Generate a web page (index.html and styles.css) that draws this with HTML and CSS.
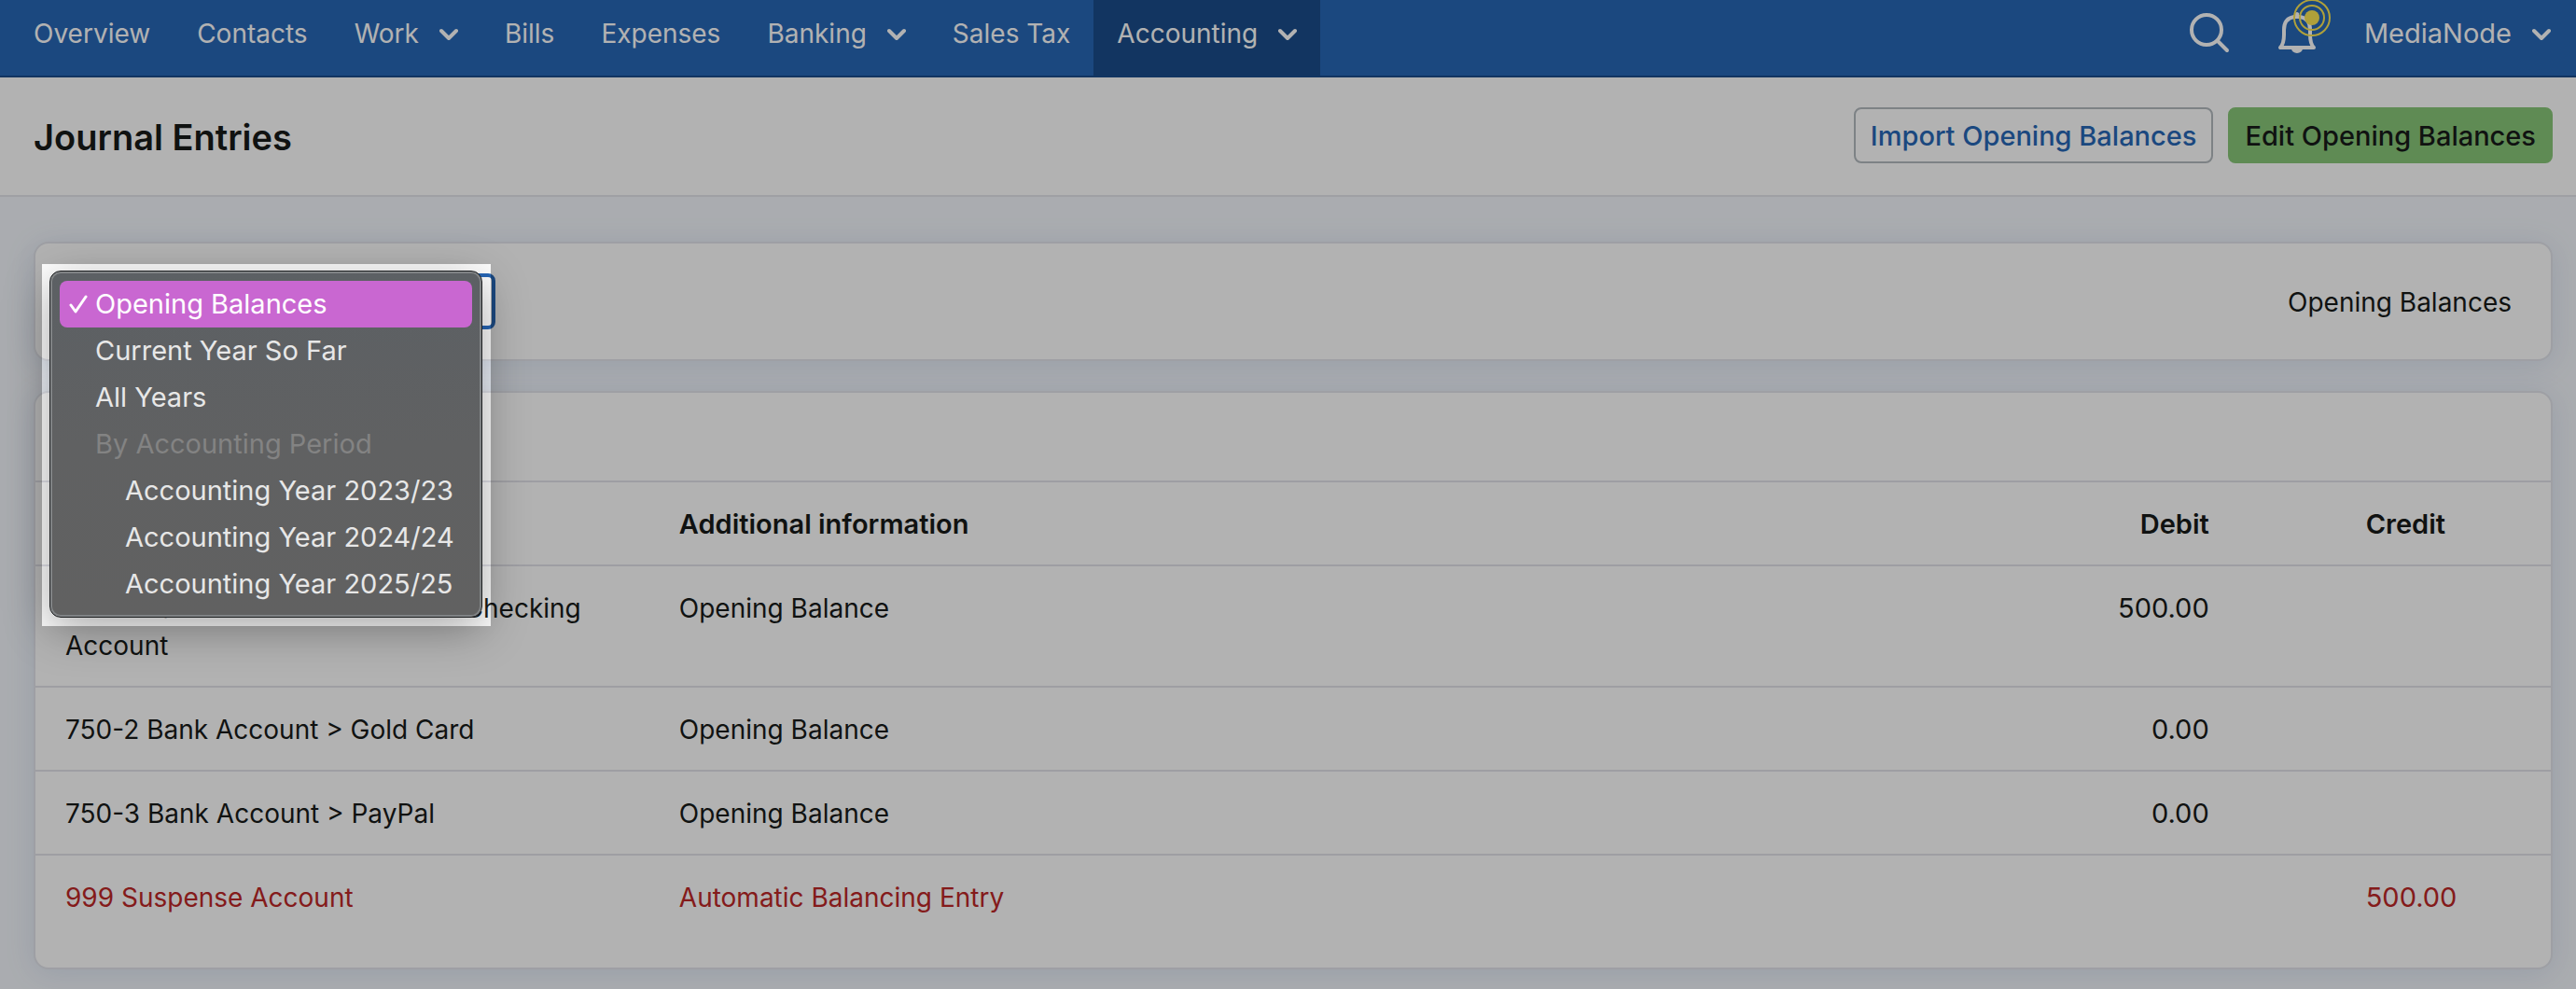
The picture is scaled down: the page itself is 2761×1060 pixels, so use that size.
FILE: index.html
```html
<!DOCTYPE html>
<html lang="en">
<head>
<meta charset="utf-8">
<title>Journal Entries</title>
<link rel="stylesheet" href="styles.css">
</head>
<body>
<header class="nav">
  <nav class="nav-links" aria-label="Main">
    <a class="nav-item" href="#">Overview</a>
    <a class="nav-item" href="#">Contacts</a>
    <a class="nav-item" href="#">Work<svg class="chevron" viewBox="0 0 20 14" aria-hidden="true"><path d="M2 3l8 8 8-8"/></svg></a>
    <a class="nav-item" href="#">Bills</a>
    <a class="nav-item" href="#">Expenses</a>
    <a class="nav-item" href="#">Banking<svg class="chevron" viewBox="0 0 20 14" aria-hidden="true"><path d="M2 3l8 8 8-8"/></svg></a>
    <a class="nav-item" href="#">Sales Tax</a>
    <a class="nav-item active" href="#" aria-current="page">Accounting<svg class="chevron" viewBox="0 0 20 14" aria-hidden="true"><path d="M2 3l8 8 8-8"/></svg></a>
  </nav>
  <div class="nav-tools">
    <button class="icon-button" type="button" aria-label="Search">
      <svg class="icon" viewBox="0 0 44 44" aria-hidden="true"><circle cx="19" cy="19" r="16"/><path d="M31 31l10 10"/></svg>
    </button>
    <button class="icon-button bell" type="button" aria-label="Notifications">
      <svg class="icon" viewBox="0 0 44 44" aria-hidden="true"><path d="M4 38h36c-3-3-4-8-4-14v-5c0-8-4-13-11-14h-6C12 6 8 11 8 19v5c0 6-1 11-4 14z"/><path class="solid" d="M20 1a3 3 0 0 1 4 0v4h-4zM16 39h12a6 5 0 0 1-12 0z"/></svg>
      <svg class="beacon" viewBox="0 0 40 40" aria-hidden="true"><circle cx="20" cy="20" r="19"/><circle cx="20" cy="20" r="13"/><circle class="dot" cx="20" cy="20" r="8"/></svg>
    </button>
    <a class="account" href="#">MediaNode<svg class="chevron" viewBox="0 0 20 14" aria-hidden="true"><path d="M2 3l8 8 8-8"/></svg></a>
  </div>
</header>

<div class="page-head">
  <h1 class="title">Journal Entries</h1>
  <div class="actions">
    <button class="button outline" type="button">Import Opening Balances</button>
    <button class="button primary" type="button">Edit Opening Balances</button>
  </div>
</div>

<main class="content">
  <section class="card filter">
    <div class="period">
      <select class="period-select" aria-label="Period">
        <option></option>
      </select>
      <div class="spotlight"></div>
      <ul class="menu" role="listbox" aria-label="Period options">
        <li class="option selected" role="option" aria-selected="true"><svg class="check" viewBox="0 0 20 22" aria-hidden="true"><path d="M2 12l5 7L18 3"/></svg>Opening Balances</li>
        <li class="option" role="option">Current Year So Far</li>
        <li class="option" role="option">All Years</li>
        <li class="option group" role="presentation">By Accounting Period</li>
        <li class="option nested" role="option">Accounting Year 2023/23</li>
        <li class="option nested" role="option">Accounting Year 2024/24</li>
        <li class="option nested" role="option">Accounting Year 2025/25</li>
      </ul>
    </div>
    <p class="range">Opening Balances</p>
  </section>

  <section class="card entries">
    <table class="table">
      <colgroup><col class="col-account"><col><col class="col-debit"><col class="col-credit"></colgroup>
      <thead>
        <tr><th scope="col" aria-label="Account"></th><th scope="col">Additional information</th><th scope="col" class="debit">Debit</th><th scope="col" class="credit">Credit</th></tr>
      </thead>
      <tbody>
        <tr><td>750-1 Bank Account &gt; Business Checking Account</td><td>Opening Balance</td><td class="debit">500.00</td><td class="credit"></td></tr>
        <tr><td>750-2 Bank Account &gt; Gold Card</td><td>Opening Balance</td><td class="debit">0.00</td><td class="credit"></td></tr>
        <tr><td>750-3 Bank Account &gt; PayPal</td><td>Opening Balance</td><td class="debit">0.00</td><td class="credit"></td></tr>
        <tr class="suspense"><td>999 Suspense Account</td><td>Automatic Balancing Entry</td><td class="debit"></td><td class="credit">500.00</td></tr>
      </tbody>
    </table>
  </section>
</main>
</body>
</html>
```

FILE: styles.css
```css
* { box-sizing: border-box; }

body {
  margin: 0;
  background: #f4f7fc;
  color: #171a19;
  font-family: Inter, "Liberation Sans", sans-serif;
  font-size: 28px;
  line-height: 40px;
}

a { color: inherit; text-decoration: none; }
button, select { font: inherit; }

/* Top navigation */
.nav {
  display: flex;
  justify-content: space-between;
  background: #2767b7;
  border-bottom: 2px solid #1b4d8b;
  color: #fff;
}
.nav-links { display: flex; padding-left: 11px; }
.nav-item {
  display: flex;
  align-items: center;
  gap: 22px;
  padding: 16px 25px 25px;
}
.nav-item.active { background: #1b4d8b; }
.chevron {
  width: 20px;
  height: 14px;
  margin-top: 2px;
  fill: none;
  stroke: currentColor;
  stroke-width: 4;
  stroke-linecap: round;
  stroke-linejoin: round;
}
.nav-tools {
  display: flex;
  align-items: flex-start;
  gap: 50px;
  padding: 13px 27px 0 0;
}
.icon-button {
  position: relative;
  display: flex;
  padding: 0;
  border: 0;
  background: none;
  color: inherit;
}
.icon {
  width: 44px;
  height: 44px;
  fill: none;
  stroke: currentColor;
  stroke-width: 4;
  stroke-linecap: round;
  stroke-linejoin: round;
}
.icon .solid { fill: currentColor; stroke: none; }
.beacon {
  position: absolute;
  top: -14px;
  right: -14px;
  width: 40px;
  height: 40px;
  fill: none;
  stroke: #fbe653;
  stroke-width: 2;
}
.beacon .dot { fill: #fbe653; stroke: none; }
.account {
  display: flex;
  align-items: center;
  gap: 22px;
  padding-top: 3px;
  font-size: 29px;
}

/* Page heading */
.page-head {
  display: flex;
  align-items: center;
  justify-content: space-between;
  padding: 32px 25px 34px 36px;
  background: #fff;
  border-bottom: 2px solid #e4e6eb;
}
.title { margin: 0; padding-top: 4px; font-size: 38px; font-weight: 600; line-height: 48px; }
.actions { display: flex; gap: 16px; }
.button {
  padding: 9px 16px 7px;
  border: 2px solid #b3babf;
  border-radius: 8px;
  background: #fff;
  color: #2767b7;
  font-size: 29px;
  font-weight: 500;
}
.button.primary { border-color: #88c879; background: #88c879; color: #171a19; }

/* Cards */
.content {
  display: flex;
  flex-direction: column;
  gap: 32px;
  padding: 48px 25px 21px 36px;
}
.card {
  border: 2px solid #e2e4eb;
  border-radius: 16px;
  background: #fff;
  box-shadow: 0 4px 32px rgba(50, 90, 160, 0.13);
}
.filter {
  display: flex;
  align-items: center;
  justify-content: space-between;
  padding: 32px 42px 32px 32px;
}
.range { margin: 0; padding-top: 2px; }
.period { position: relative; display: flex; width: 461px; }
.period-select {
  width: 100%;
  height: 60px;
  padding: 0 16px;
  border: 4px solid #2767b7;
  border-radius: 8px;
  background: #fff;
  appearance: none;
}

/* Dims everything but the open menu */
.spotlight {
  position: absolute;
  z-index: 1;
  top: -10px;
  left: -25px;
  width: 481px;
  height: 388px;
  box-shadow: 0 0 0 4000px rgba(0, 0, 0, 0.3);
}
.menu {
  position: absolute;
  z-index: 2;
  top: -3px;
  left: -17px;
  width: 464px;
  margin: 0;
  padding: 10px;
  list-style: none;
  border: 1px solid #1c1e20;
  border-radius: 12px;
  background: linear-gradient(#5c6064, #606162 50%, #616161);
  box-shadow: inset 0 0 0 2px #808385, 0 12px 48px rgba(0, 0, 0, 0.35);
  font-size: 29px;
}
.option {
  position: relative;
  padding: 5px 38px;
  border-radius: 8px;
  color: #e7e7e7;
  white-space: nowrap;
}
.option.selected { background: #c967d1; color: #fff; }
.option.group { color: #838383; }
.option.nested { padding-left: 70px; }
.check {
  position: absolute;
  top: 14px;
  left: 10px;
  width: 20px;
  height: 22px;
  fill: none;
  stroke: currentColor;
  stroke-width: 3;
  stroke-linecap: round;
  stroke-linejoin: round;
}

/* Entries table */
.entries { padding: 94px 0 32px; }
.table {
  width: 100%;
  border-collapse: separate;
  border-spacing: 0;
  table-layout: fixed;
}
.col-account { width: 24.4%; }
.col-debit { width: 12%; }
.col-credit { width: 12.4%; }
.table th, .table td {
  padding: 25px 32px 23px;
  border-top: 2px solid #e3e3ea;
  text-align: left;
  vertical-align: top;
}
.table th, .table .debit, .table .credit { font-size: 29px; }
.table th { font-weight: 600; }
.table .debit { text-align: right; }
.table .credit { padding-left: 136px; }
.table .suspense td { color: #bd2727; }
```
